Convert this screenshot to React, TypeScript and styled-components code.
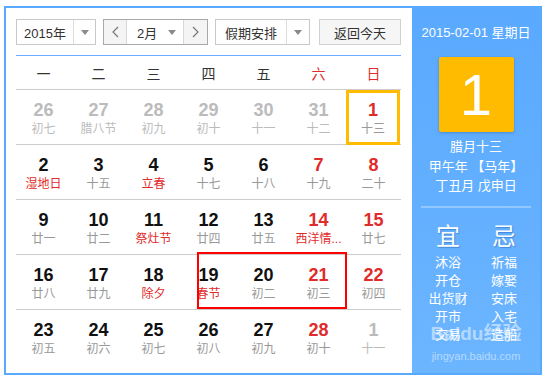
import styled, { createGlobalStyle } from "styled-components";

const GlobalStyle = createGlobalStyle`
  body {
    margin: 0;
    background: #ffffff;
    font-family: "Liberation Sans", "Noto Sans CJK SC", sans-serif;
  }
`;

const Frame = styled.div`
  display: flex;
  box-sizing: border-box;
  margin: 6px 0 0 4px;
  width: 538px;
  height: 369px;
  border: 2px solid #59a9ff;
`;

const Main = styled.div`
  position: relative;
  width: 406px;
  padding: 11px 11px 0 10px;
  box-sizing: border-box;
`;

const Toolbar = styled.div`
  display: flex;
  height: 26px;
`;

const SelectBox = styled.div<{ $w: number; $gap?: number; $dark?: boolean }>`
  display: flex;
  box-sizing: border-box;
  width: ${(p) => p.$w}px;
  height: 26px;
  margin-left: ${(p) => p.$gap ?? 0}px;
  border: 1px solid ${(p) => (p.$dark ? "#a9a9a9" : "#c9c9c9")};
  background: #ffffff;
  font-size: 13px;
  color: #333;
  white-space: nowrap;
`;

const SelectText = styled.div<{ $w: number }>`
  width: ${(p) => p.$w}px;
  display: flex;
  align-items: center;
  justify-content: center;
  border-right: 1px solid #dddddd;
`;

const ArrowCell = styled.div`
  flex: 1;
  display: flex;
  align-items: center;
  justify-content: center;
  &::after {
    content: "";
    border-left: 4px solid transparent;
    border-right: 4px solid transparent;
    border-top: 5px solid #8a8a8a;
  }
`;

const NavButton = styled.div<{ $w: number; $side: "l" | "r" }>`
  width: ${(p) => p.$w}px;
  display: flex;
  align-items: center;
  justify-content: center;
  background: #f4f4f4;
  ${(p) => (p.$side === "l" ? "border-right" : "border-left")}: 1px solid #d8d8d8;
`;

const MonthCell = styled.div`
  flex: 1;
  display: flex;
  align-items: center;
  padding: 0 7px 0 10px;
  justify-content: space-between;
  &::after {
    content: "";
    border-left: 4px solid transparent;
    border-right: 4px solid transparent;
    border-top: 5px solid #8a8a8a;
  }
`;

const TodayButton = styled.div`
  box-sizing: border-box;
  width: 82px;
  height: 26px;
  margin-left: 9px;
  border: 1px solid #d0d0d0;
  background: #f6f6f6;
  display: flex;
  align-items: center;
  justify-content: center;
  font-size: 13px;
  color: #333;
`;

const WeekHead = styled.div`
  display: grid;
  grid-template-columns: repeat(7, 55px);
  height: 33px;
  margin-top: 10px;
  border-top: 1px solid #66adff;
  border-bottom: 1px solid #cccccc;
`;

const WeekName = styled.div<{ $red?: boolean }>`
  display: flex;
  align-items: center;
  justify-content: center;
  font-size: 14px;
  color: ${(p) => (p.$red ? "#e02b2b" : "#333333")};
`;

const Body = styled.div`
  position: relative;
`;

const Row = styled.div<{ $line: boolean }>`
  display: grid;
  grid-template-columns: repeat(7, 55px);
  height: 55px;
  box-sizing: border-box;
  border-bottom: ${(p) => (p.$line ? "1px solid #cccccc" : "none")};
`;

const Cell = styled.div<{ $today?: boolean }>`
  display: flex;
  flex-direction: column;
  align-items: center;
  padding-top: 10px;
  box-sizing: border-box;
  height: 55px;
  box-shadow: ${(p) => (p.$today ? "inset 0 0 0 3px #ffbb00" : "none")};
  margin-right: ${(p) => (p.$today ? "1px" : "0")};
`;

const DayNum = styled.div<{ $tone: string }>`
  font-size: 18px;
  font-weight: bold;
  line-height: 20px;
  color: ${(p) => p.$tone};
`;

const Lunar = styled.div<{ $tone: string }>`
  font-size: 12px;
  line-height: 18px;
  color: ${(p) => p.$tone};
  white-space: nowrap;
`;

const Mark = styled.div`
  position: absolute;
  left: 181px;
  top: 162px;
  width: 150px;
  height: 57px;
  box-sizing: border-box;
  border: 2px solid #ff0000;
`;

const Side = styled.div`
  position: relative;
  flex: 1;
  background: linear-gradient(#59a9ff, #6cb5ff);
  color: #ffffff;
  display: flex;
  flex-direction: column;
  align-items: center;
  padding-top: 15px;
`;

const SideDate = styled.div`
  font-size: 13px;
  line-height: 20px;
`;

const BigDay = styled.div`
  width: 75px;
  height: 75px;
  margin-top: 14px;
  background: #ffbb00;
  border-radius: 2px;
  box-shadow: 0 1px 3px rgba(0, 0, 0, 0.2);
  display: flex;
  align-items: center;
  justify-content: center;
  font-size: 58px;
  line-height: 1;
`;

const SideInfo = styled.div`
  margin-top: 5px;
  font-size: 13px;
  line-height: 19.5px;
  text-align: center;
`;

const Divider = styled.div`
  width: 110px;
  height: 2px;
  margin-top: 10px;
  background: rgba(255, 255, 255, 0.3);
`;

const Advice = styled.div`
  display: grid;
  grid-template-columns: 56px 56px;
  margin-top: 14px;
`;

const AdviceCol = styled.div`
  display: flex;
  flex-direction: column;
  align-items: center;
`;

const AdviceTitle = styled.div`
  font-size: 24px;
  line-height: 30px;
  margin-bottom: 2px;
  text-shadow: 1px 1px 1px rgba(0, 60, 140, 0.35);
`;

const AdviceItem = styled.div`
  font-size: 13px;
  line-height: 18px;
`;

const Watermark = styled.div`
  position: absolute;
  left: 0;
  right: 0;
  bottom: 10px;
  display: flex;
  flex-direction: column;
  align-items: center;
  color: rgba(255, 255, 255, 0.5);
  white-space: nowrap;
  pointer-events: none;
`;

const MarkLogo = styled.div`
  font-size: 19px;
  font-weight: bold;
  line-height: 22px;
`;

const MarkUrl = styled.div`
  font-size: 11px;
  line-height: 14px;
  margin-top: 4px;
`;

type Day = { n: number; l: string; kind?: "other" | "red"; fest?: boolean; today?: boolean };

const rows: Day[][] = [
  [
    { n: 26, l: "初七", kind: "other" },
    { n: 27, l: "腊八节", kind: "other" },
    { n: 28, l: "初九", kind: "other" },
    { n: 29, l: "初十", kind: "other" },
    { n: 30, l: "十一", kind: "other" },
    { n: 31, l: "十二", kind: "other" },
    { n: 1, l: "十三", kind: "red", today: true },
  ],
  [
    { n: 2, l: "湿地日", fest: true },
    { n: 3, l: "十五" },
    { n: 4, l: "立春", fest: true },
    { n: 5, l: "十七" },
    { n: 6, l: "十八" },
    { n: 7, l: "十九", kind: "red" },
    { n: 8, l: "二十", kind: "red" },
  ],
  [
    { n: 9, l: "廿一" },
    { n: 10, l: "廿二" },
    { n: 11, l: "祭灶节", fest: true },
    { n: 12, l: "廿四" },
    { n: 13, l: "廿五" },
    { n: 14, l: "西洋情...", kind: "red", fest: true },
    { n: 15, l: "廿七", kind: "red" },
  ],
  [
    { n: 16, l: "廿八" },
    { n: 17, l: "廿九" },
    { n: 18, l: "除夕", fest: true },
    { n: 19, l: "春节", fest: true },
    { n: 20, l: "初二" },
    { n: 21, l: "初三", kind: "red" },
    { n: 22, l: "初四", kind: "red" },
  ],
  [
    { n: 23, l: "初五" },
    { n: 24, l: "初六" },
    { n: 25, l: "初七" },
    { n: 26, l: "初八" },
    { n: 27, l: "初九" },
    { n: 28, l: "初十", kind: "red" },
    { n: 1, l: "十一", kind: "other" },
  ],
];

const weekNames = ["一", "二", "三", "四", "五", "六", "日"];

function numTone(d: Day) {
  if (d.kind === "other") return "#bbbbbb";
  if (d.kind === "red") return "#e02b2b";
  return "#111111";
}

function lunarTone(d: Day) {
  if (d.kind === "other") return "#bbbbbb";
  if (d.fest) return "#e02b2b";
  return "#999999";
}

const Chevron = ({ dir }: { dir: "l" | "r" }) => (
  <svg width="7" height="12" viewBox="0 0 7 12">
    <polyline
      points={dir === "l" ? "6,1 1,6 6,11" : "1,1 6,6 1,11"}
      fill="none"
      stroke="#777"
      strokeWidth="1.2"
    />
  </svg>
);

export default function App() {
  return (
    <>
      <GlobalStyle />
      <Frame>
        <Main>
          <Toolbar>
            <SelectBox $w={80}>
              <SelectText $w={56}>2015年</SelectText>
              <ArrowCell />
            </SelectBox>
            <SelectBox $w={105} $gap={7} $dark>
              <NavButton $w={22} $side="l">
                <Chevron dir="l" />
              </NavButton>
              <MonthCell>2月</MonthCell>
              <NavButton $w={23} $side="r">
                <Chevron dir="r" />
              </NavButton>
            </SelectBox>
            <SelectBox $w={95} $gap={7}>
              <SelectText $w={70}>假期安排</SelectText>
              <ArrowCell />
            </SelectBox>
            <TodayButton>返回今天</TodayButton>
          </Toolbar>
          <WeekHead>
            {weekNames.map((w, i) => (
              <WeekName key={w} $red={i >= 5}>
                {w}
              </WeekName>
            ))}
          </WeekHead>
          <Body>
            {rows.map((r, ri) => (
              <Row key={ri} $line={ri < rows.length - 1}>
                {r.map((d, ci) => (
                  <Cell key={ci} $today={d.today}>
                    <DayNum $tone={numTone(d)}>{d.n}</DayNum>
                    <Lunar $tone={d.today ? "#999999" : lunarTone(d)}>{d.l}</Lunar>
                  </Cell>
                ))}
              </Row>
            ))}
            <Mark />
          </Body>
        </Main>
        <Side>
          <SideDate>2015-02-01 星期日</SideDate>
          <BigDay>1</BigDay>
          <SideInfo>
            腊月十三
            <br />
            甲午年 【马年】
            <br />
            丁丑月 戊申日
          </SideInfo>
          <Divider />
          <Advice>
            <AdviceCol>
              <AdviceTitle>宜</AdviceTitle>
              {["沐浴", "开仓", "出货财", "开市", "交易"].map((t) => (
                <AdviceItem key={t}>{t}</AdviceItem>
              ))}
            </AdviceCol>
            <AdviceCol>
              <AdviceTitle>忌</AdviceTitle>
              {["祈福", "嫁娶", "安床", "入宅", "造船"].map((t) => (
                <AdviceItem key={t}>{t}</AdviceItem>
              ))}
            </AdviceCol>
          </Advice>
          <Watermark>
            <MarkLogo>Baidu经验</MarkLogo>
            <MarkUrl>jingyan.baidu.com</MarkUrl>
          </Watermark>
        </Side>
      </Frame>
    </>
  );
}
